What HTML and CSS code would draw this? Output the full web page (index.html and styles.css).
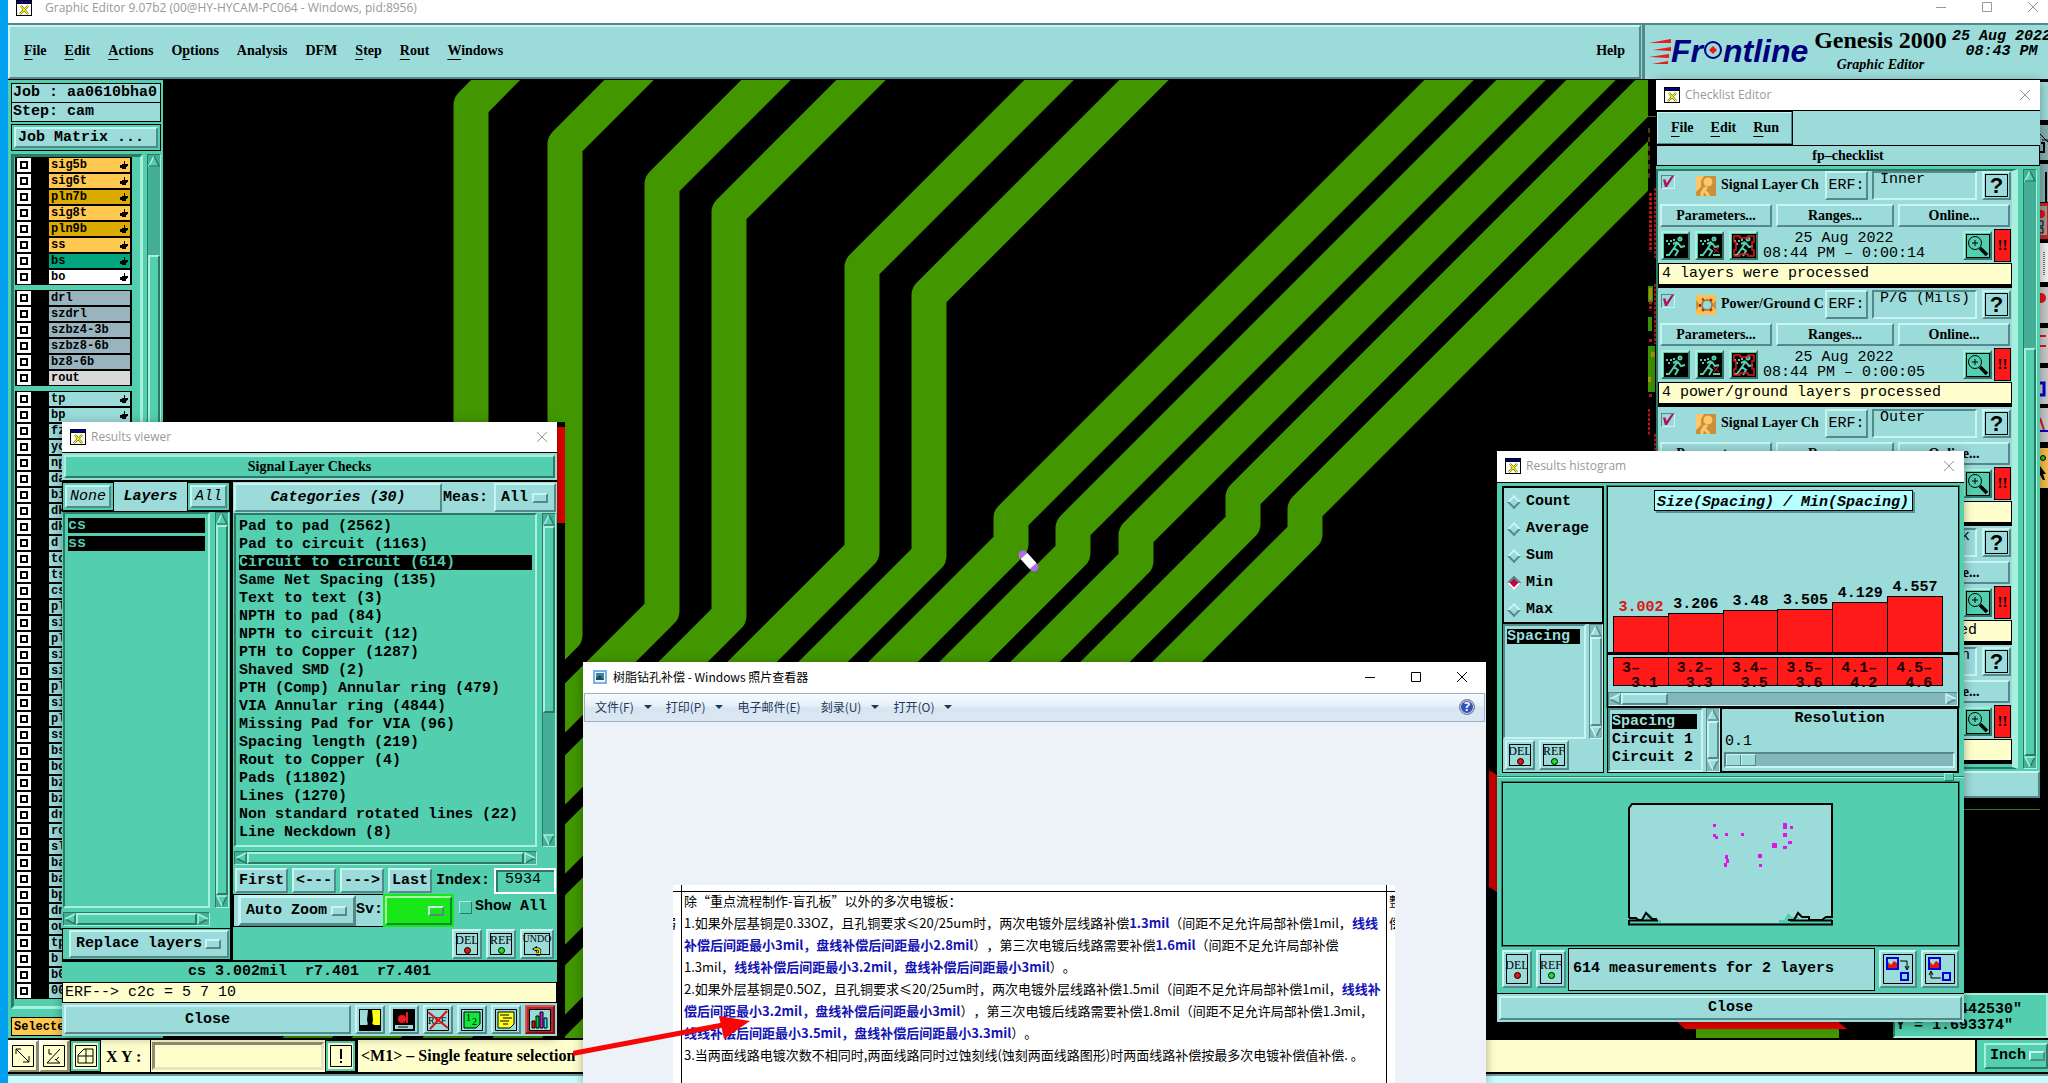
FILE: index.html
```html
<!DOCTYPE html>
<html lang="zh-CN">
<head>
<meta charset="utf-8">
<title>Graphic Editor</title>
<link rel="stylesheet" href="styles.css">
</head>
<body>
<svg class="defs" aria-hidden="true">
  <symbol id="xwin" viewBox="0 0 16 16"><rect width="16" height="16" fill="#000"/><rect x="1" y="4" width="14" height="11" fill="#fff"/><rect x="1" y="1" width="14" height="2" fill="#00008b"/><path d="M5 6l7 8M12 6l-8 8" stroke="#222" stroke-width="2"/><path d="M5 6l7 8M12 6l-8 8" stroke="#ff0" stroke-width="1.2"/></symbol>
  <symbol id="x" viewBox="0 0 12 12"><path d="M1 1l10 10M11 1L1 11" fill="none" stroke="currentColor"/></symbol>
  <symbol id="min" viewBox="0 0 12 12"><path d="M1 6.5h10" stroke="currentColor"/></symbol>
  <symbol id="max" viewBox="0 0 12 12"><path d="M1.500 1.500h9v9h-9z" fill="none" stroke="currentColor"/></symbol>
  <symbol id="hand" viewBox="0 0 8 8"><path d="M4 0h1v3h3v2H7v1H6v2H2V7H0V4h2V3h2z"/></symbol>
  <symbol id="up" viewBox="0 0 12 12"><path d="M6 1L1 11h10z" fill="var(--f)"/><path d="M11 11H1L6 1" fill="none" stroke="var(--l)" stroke-width="1.500"/><path d="M6 1l5 10H1" fill="none" stroke="var(--d)" stroke-width="1.500"/></symbol>
  <symbol id="down" viewBox="0 0 12 12"><path d="M6 11L1 1h10z" fill="var(--f)"/><path d="M11 1L6 11" stroke="var(--d)" stroke-width="1.500"/><path d="M11 1H1l5 10" fill="none" stroke="var(--l)" stroke-width="1.500"/></symbol>
  <symbol id="left" viewBox="0 0 12 12"><path d="M1 6l10-5v10z" fill="var(--f)"/><path d="M11 1v10L1 6" fill="none" stroke="var(--d)" stroke-width="1.500"/><path d="M1 6l10-5" stroke="var(--l)" stroke-width="1.500"/></symbol>
  <symbol id="right" viewBox="0 0 12 12"><path d="M11 6L1 1v10z" fill="var(--f)"/><path d="M11 6L1 11" stroke="var(--d)" stroke-width="1.500"/><path d="M1 11V1l10 5" fill="none" stroke="var(--l)" stroke-width="1.500"/></symbol>
  <symbol id="run1" viewBox="0 0 24 24"><rect width="24" height="24"/><g fill="none" stroke="#53cfaf" stroke-width="2"><circle cx="16" cy="5" r="1.500"/><path d="M14 8l-4 6 4 3-3 5M10 14l-5 7H2M13 8l-4 2M14 9l3 4 4-1" /></g><path d="M2 6h2v2H2zM6 6h2v2H6zM4 9h2v2H4zM9 5h2v2H9z" fill="#53cfaf"/></symbol>
  <symbol id="run2" viewBox="0 0 24 24"><use href="#run1"/><path d="M15 21h7" stroke="#53cfaf" stroke-width="2"/><path d="M15 14l6 5M21 13l-5 6" stroke="#d22"/></symbol>
  <symbol id="run3" viewBox="0 0 24 24"><use href="#run1"/><path d="M2 2h6v2h8V2h6v6h-2v8h2v6h-6v-2H8v2H2v-6h2V8H2z" fill="none" stroke="#e01818" stroke-width="1.500"/></symbol>
  <symbol id="mag" viewBox="0 0 24 24"><rect x=".5" y=".5" width="23" height="23" fill="none" stroke="#000"/><circle cx="9" cy="9" r="6.500" fill="none" stroke="#000"/><path d="M6 9h6M9 6v6" stroke="#000"/><path d="M14 14l7 7" stroke="#000" stroke-width="3.500"/></symbol>
  <symbol id="sig" viewBox="0 0 20 20"><rect width="20" height="20" fill="#c98f3c"/><path d="M0 0h8L5 5v6L0 16z" fill="#fbc868"/><circle cx="12" cy="6" r="5" fill="#fbc868" stroke="#c98f3c"/><path d="M11 11L8 14l5 6M9 12l-3 5v3" stroke="#fbc868" stroke-width="3" fill="none"/></symbol>
  <symbol id="pwr" viewBox="0 0 20 20"><rect width="20" height="20" fill="#fbc04e"/><path d="M0 5l4 5-4 5zM20 5l-4 5 4 5z" fill="#c98f3c"/><circle cx="11" cy="10" r="5" fill="#9bdbda" stroke="#8a8a5a" stroke-width="2"/><path d="M6 5l2-1M14 4l2 2M16 14l-2 2M6 14l2 2M4 9v3" stroke="#d01818" stroke-width="2"/></symbol>
</svg>

<div class="desktop">
<main class="app">
  <header class="apptitle"><svg class="i16"><use href="#xwin"/></svg><h1>Graphic Editor 9.07b2 (00@HY-HYCAM-PC064 - Windows, pid:8956)</h1>
    <span class="wbtns"><button aria-label="Minimize"><svg><use href="#min"/></svg></button><button aria-label="Maximize"><svg><use href="#max"/></svg></button><button aria-label="Close window"><svg><use href="#x"/></svg></button></span></header>
  <div class="top">
    <nav class="menubar bev">
      <button><u>F</u>ile</button><button><u>E</u>dit</button><button><u>A</u>ctions</button><button>O<u>p</u>tions</button><button>Analysis</button><button>DFM</button><button><u>S</u>tep</button><button><u>R</u>out</button><button><u>W</u>indows</button><button class="help">Help</button>
    </nav>
    <div class="brand">
      <div class="logo"><svg width="22" height="26" viewBox="0 0 22 26"><path d="M0 4l22-4v4zM4 11l18-3v4zM0 18l20-3v4zM3 25l16-3v3z" fill="#f01818"/></svg><b>Fr<svg width="20" height="24" viewBox="0 0 20 24"><circle cx="10" cy="13" r="8" fill="none" stroke="#00007c" stroke-width="2"/><path d="M10 9l4 4-4 4-4-4z" fill="#f01818"/></svg>ntline</b></div>
      <div class="product"><strong>Genesis 2000</strong><em>Graphic Editor</em></div>
      <time>25 Aug 2022<br>08:43 PM</time>
    </div>
  </div>
  <div class="work">
    <aside class="side">
      <div class="fact">Job : aa0610bha0</div>
      <div class="fact">Step: cam</div>
      <div class="matrix"><button class="bev">Job Matrix ...</button></div>
      <div class="layerbox">
        <div class="layers">
          <div class="grp">
            <label><input type="checkbox"><span class="sig">sig5b<svg><use href="#hand"/></svg></span></label>
            <label><input type="checkbox"><span class="sig">sig6t<svg><use href="#hand"/></svg></span></label>
            <label><input type="checkbox"><span class="pln">pln7b<svg><use href="#hand"/></svg></span></label>
            <label><input type="checkbox"><span class="sig">sig8t<svg><use href="#hand"/></svg></span></label>
            <label><input type="checkbox"><span class="pln">pln9b<svg><use href="#hand"/></svg></span></label>
            <label><input type="checkbox"><span class="sig">ss<svg><use href="#hand"/></svg></span></label>
            <label><input type="checkbox"><span class="bs">bs<svg><use href="#hand"/></svg></span></label>
            <label><input type="checkbox"><span class="bo">bo<svg><use href="#hand"/></svg></span></label>
          </div>
          <div class="grp">
            <label><input type="checkbox"><span class="drl">drl</span></label>
            <label><input type="checkbox"><span class="drl">szdrl</span></label>
            <label><input type="checkbox"><span class="drl">szbz4-3b</span></label>
            <label><input type="checkbox"><span class="drl">szbz8-6b</span></label>
            <label><input type="checkbox"><span class="drl">bz8-6b</span></label>
            <label><input type="checkbox"><span class="rout">rout</span></label>
          </div>
          <div class="grp">
            <label><input type="checkbox"><span>tp<svg><use href="#hand"/></svg></span></label>
            <label><input type="checkbox"><span>bp<svg><use href="#hand"/></svg></span></label>
            <label><input type="checkbox"><span>fz</span></label>
            <label><input type="checkbox"><span>yc</span></label>
            <label><input type="checkbox"><span>np</span></label>
            <label><input type="checkbox"><span>da</span></label>
            <label><input type="checkbox"><span>bi</span></label>
            <label><input type="checkbox"><span>dk</span></label>
            <label><input type="checkbox"><span>dk</span></label>
            <label><input type="checkbox"><span>d</span></label>
            <label><input type="checkbox"><span>to</span></label>
            <label><input type="checkbox"><span>ts</span></label>
            <label><input type="checkbox"><span>cs</span></label>
            <label><input type="checkbox"><span>pl</span></label>
            <label><input type="checkbox"><span>si</span></label>
            <label><input type="checkbox"><span>pl</span></label>
            <label><input type="checkbox"><span>si</span></label>
            <label><input type="checkbox"><span>si</span></label>
            <label><input type="checkbox"><span>pl</span></label>
            <label><input type="checkbox"><span>si</span></label>
            <label><input type="checkbox"><span>pl</span></label>
            <label><input type="checkbox"><span>ss</span></label>
            <label><input type="checkbox"><span>bs</span></label>
            <label><input type="checkbox"><span>bo</span></label>
            <label><input type="checkbox"><span>bz</span></label>
            <label><input type="checkbox"><span>bz</span></label>
            <label><input type="checkbox"><span>dr</span></label>
            <label><input type="checkbox"><span>ro</span></label>
            <label><input type="checkbox"><span>sl</span></label>
            <label><input type="checkbox"><span>ba</span></label>
            <label><input type="checkbox"><span>ba</span></label>
            <label><input type="checkbox"><span>bp</span></label>
            <label><input type="checkbox"><span>dn</span></label>
            <label><input type="checkbox"><span>ou</span></label>
            <label><input type="checkbox"><span>tp</span></label>
            <label><input type="checkbox"><span>b</span></label>
            <label><input type="checkbox"><span>b0</span></label>
            <label><input type="checkbox"><span>00</span></label>
          </div>
        </div>
        <div class="sb v"><svg><use href="#up"/></svg><i class="gap90"></i><b></b><svg><use href="#down"/></svg></div>
      </div>
      <div class="selected">Selected</div>
    </aside>
    <div class="canvas">
      <svg width="100%" height="100%" aria-label="Board traces">
        <g transform="translate(-163 -79)">
          <clipPath id="view"><rect x="163" y="79" width="1485" height="960"/></clipPath>
          <g clip-path="url(#view)" fill="none" stroke="#429700" stroke-width="35" stroke-linejoin="round">
            <path d="M534 40L471 104V700"/>
            <path d="M668 40L565 143V634L465 734"/>
            <path d="M805 40L662 183V610L262 1010"/>
            <path d="M900 40L729 211V615L229 1115"/>
            <path d="M1088 40L862 266V551L300 1113"/>
            <path d="M1183 40L929 294V555L371 1113"/>
            <path d="M1488 40L1011 517V543L441 1113"/>
            <path d="M1560 40L1073 527V552L512 1113"/>
            <path d="M1630 40L1136 534V560L583 1113"/>
            <path d="M1699 40L1243 496V523L653 1113"/>
            <path d="M1773 40L1305 508V533L725 1113"/>
          </g>
          <path d="M557 421h8v617h-8z"/>
          <path d="M557 426h8v96h-8z" fill="#e00000"/>
          <path d="M1023 554l11 12" stroke="#b468f0" stroke-width="9" stroke-linecap="round"/>
          <path d="M1024 555l9 10" stroke="#fff" stroke-width="9"/>
          <path d="M1489 769l8 5v117l-8-5z" fill="#d80000"/>
          <path d="M1675 1019h161l11 9h-162z" fill="#f00000"/>
          <path d="M1696 1028h143v10h-143z" fill="#429700"/>
          <path d="M1648 115.500h10M1964 808.500h84M2038 674.500h10" stroke="#3f7a10"/>
          <g stroke="#c01818" stroke-dasharray="3 1.500">
            <path d="M1650.500 192v59M1650.500 296v14M1650.500 338v4M1650.500 393v4" stroke-width="3"/>
            <path d="M1655 187v70M1655 283v60M1655 433v20M1649 408v27" stroke-width="2"/>
          </g>
          <path d="M1648 285h5v16h-5zM1648 316h4v14h-4zM1648 345h7v46h-7z" fill="#429700"/>
          <path d="M1649 127v52" stroke="#a88410" stroke-width="1" stroke-dasharray="5 4"/>
          <path d="M1651 351h4v5h-4zM1648 376h3v5h-3zM1649 287h3v12h-3z" fill="#b09a10"/>
        </g>
      </svg>
    </div>
    <svg class="tools" width="8" height="470" aria-hidden="true"><rect width="8" height="470"/>
      <path d="M0 2h8v38H0z" fill="#9bdbda"/><path d="M0 45h8v35H0zM0 84h8v38H0z" fill="#83b0b3"/><path d="M0 54l8 8M2 60h6" stroke="#000"/><path d="M1 63h3v9H0M6 92v36h-6" stroke="#000" fill="none" stroke-width="2"/>
      <path d="M0 123h8v36H0z" fill="#d02020"/><path d="M0 126h7v29H0z" fill="#9a9a9a"/><circle cx="1" cy="134" r="4" fill="#e01010"/><path d="M0 141h3v5H0M0 148h3v5H0" stroke="#000" fill="none"/>
      <path d="M0 163h8v39H0z" fill="#f0f0f0"/><path d="M4 172v24" stroke="#000" stroke-dasharray="1 1"/>
      <path d="M0 207h8v36H0zM0 248h8v35H0zM0 288h8v36H0zM0 328h8v34H0z" fill="#c9c9c9"/><circle cx="1" cy="218" r="5" fill="#e01010"/><path d="M0 256h6M0 266h6" stroke="#e01010" stroke-width="2"/><path d="M0 303h4v12H0" fill="none" stroke="#00c" stroke-width="3"/><path d="M0 338l4 12" stroke="#e01010" stroke-width="2"/><path d="M0 351h8" stroke="#00c" stroke-width="2"/>
      <path d="M0 368h8v40H0z" fill="#f4bc4a"/><circle cx="3" cy="378" r="2.500" fill="#22c822" stroke="#000"/><path d="M0 386l6 8H3l2 6H3l-3-5z"/>
    </svg>
    <div class="xy">X = 10.442530"<br>Y = 1.693374"</div>
  </div>
  <footer class="status">
    <button class="cream bev" aria-label="Distance"><svg viewBox="0 0 22 22"><path d="M.5.500h21v21H.5zM4 4l13 13M4 9V4h5M17 11v6h-6" fill="none" stroke="#000"/></svg></button>
    <button class="cream bev" aria-label="Angle"><svg viewBox="0 0 22 22"><path d="M.5.500h21v21H.5zM4 18L17 4M4 18h13M6 4v5h3M12 14l5 4M16 12l-3 3" fill="none" stroke="#000"/></svg></button>
    <button class="cream tealedge bev" aria-label="Grid"><svg viewBox="0 0 22 22"><path d="M.5.500h21v21H.5zM3 10l6-6h9v14H3zM11 4v14M3 11h15" fill="none" stroke="#000"/></svg></button>
    <label class="xylab" for="xyin">X Y :</label>
    <input id="xyin" class="xyin" type="text">
    <button class="cream tealedge bev" aria-label="Alert"><svg viewBox="0 0 22 22"><path d="M.5.500h21v21H.5z" fill="none" stroke="#000"/><path d="M10 4h2v10h-2zM10 16h2v2h-2z"/></svg></button>
    <output>&lt;M1&gt; – Single feature selection</output>
    <div class="unit"><label class="opt bev teal"><select aria-label="Unit"><option>Inch</option></select></label></div>
  </footer>
  <div class="strip"></div>
</main>

<section class="win checklist">
  <header class="title"><svg class="i16"><use href="#xwin"/></svg><h2>Checklist Editor</h2><button aria-label="Close checklist"><svg><use href="#x"/></svg></button></header>
  <div class="cmenu"><nav class="bev"><button><u>F</u>ile</button><button><u>E</u>dit</button><button><u>R</u>un</button></nav></div>
  <h3>fp–checklist</h3>
  <div class="cbody">
    <div class="items">
      <article>
        <div class="r1"><input type="checkbox" checked aria-label="Signal layer inner"><svg class="i20"><use href="#sig"/></svg><strong>Signal Layer Ch</strong><button class="bev erf">ERF:</button><input type="text" value="Inner" aria-label="ERF model"><button class="bev q" aria-label="Help"><b>?</b></button></div>
        <div class="r2"><button class="bev">Parameters...</button><button class="bev">Ranges...</button><button class="bev">Online...</button></div>
        <div class="r3"><button class="bev teal" aria-label="Run"><svg><use href="#run1"/></svg></button><button class="bev teal" aria-label="Run local"><svg><use href="#run2"/></svg></button><button class="bev teal" aria-label="Run area"><svg><use href="#run3"/></svg></button><time>25 Aug 2022<br>08:44 PM – 0:00:14</time><button class="bev teal" aria-label="View results"><svg><use href="#mag"/></svg></button><b class="alarm">!!</b></div>
        <p>4 layers were processed</p>
      </article>
      <article>
        <div class="r1"><input type="checkbox" checked aria-label="Power ground"><svg class="i20"><use href="#pwr"/></svg><strong>Power/Ground C</strong><button class="bev erf">ERF:</button><input type="text" value="P/G (Mils)" aria-label="ERF model"><button class="bev q" aria-label="Help"><b>?</b></button></div>
        <div class="r2"><button class="bev">Parameters...</button><button class="bev">Ranges...</button><button class="bev">Online...</button></div>
        <div class="r3"><button class="bev teal" aria-label="Run"><svg><use href="#run1"/></svg></button><button class="bev teal" aria-label="Run local"><svg><use href="#run2"/></svg></button><button class="bev teal" aria-label="Run area"><svg><use href="#run3"/></svg></button><time>25 Aug 2022<br>08:44 PM – 0:00:05</time><button class="bev teal" aria-label="View results"><svg><use href="#mag"/></svg></button><b class="alarm">!!</b></div>
        <p>4 power/ground layers processed</p>
      </article>
      <article>
        <div class="r1"><input type="checkbox" checked aria-label="Signal layer outer"><svg class="i20"><use href="#sig"/></svg><strong>Signal Layer Ch</strong><button class="bev erf">ERF:</button><input type="text" value="Outer" aria-label="ERF model"><button class="bev q" aria-label="Help"><b>?</b></button></div>
        <div class="r2"><button class="bev">Parameters...</button><button class="bev">Ranges...</button><button class="bev">Online...</button></div>
        <div class="r3"><time></time><button class="bev teal" aria-label="View results"><svg><use href="#mag"/></svg></button><b class="alarm">!!</b></div>
        <p></p>
      </article>
      <article>
        <div class="r1"><strong></strong><input type="text" value="Soldermask" aria-label="ERF model"><button class="bev q" aria-label="Help"><b>?</b></button></div>
        <div class="r2"><button class="bev">Parameters...</button><button class="bev">Ranges...</button><button class="bev">Online...</button></div>
        <div class="r3"><time></time><button class="bev teal" aria-label="View results"><svg><use href="#mag"/></svg></button><b class="alarm">!!</b></div>
        <p>4 solder mask layers were processed</p>
      </article>
      <article>
        <div class="r1"><strong></strong><input type="text" value="Silkscreen" aria-label="ERF model"><button class="bev q" aria-label="Help"><b>?</b></button></div>
        <div class="r2"><button class="bev">Parameters...</button><button class="bev">Ranges...</button><button class="bev">Online...</button></div>
        <div class="r3"><time></time><button class="bev teal" aria-label="View results"><svg><use href="#mag"/></svg></button><b class="alarm">!!</b></div>
        <p></p>
      </article>
    </div>
    <div class="sb v"><svg><use href="#up"/></svg><i class="gap165"></i><b></b><svg><use href="#down"/></svg></div>
  </div>
  <button class="bev cclose" aria-label="Close"></button>
</section>

<section class="win hist">
  <header class="title"><svg class="i16"><use href="#xwin"/></svg><h2>Results histogram</h2><button aria-label="Close histogram"><svg><use href="#x"/></svg></button></header>
  <div class="hbody">
    <div class="hleft">
      <div class="stats" role="radiogroup" aria-label="Statistic">
        <label><input type="radio" name="stat">Count</label>
        <label><input type="radio" name="stat">Average</label>
        <label><input type="radio" name="stat">Sum</label>
        <label><input type="radio" name="stat" checked>Min</label>
        <label><input type="radio" name="stat">Max</label>
      </div>
      <div class="pick"><ul><li class="on">Spacing</li></ul><div class="sb v cy"><svg><use href="#up"/></svg><b></b><svg><use href="#down"/></svg></div></div>
      <div class="two"><button class="bev tag">DEL<i class="red"></i></button><button class="bev tag">REF<i class="grn"></i></button></div>
    </div>
    <div class="hright">
      <div class="chart">
        <h4>Size(Spacing) / Min(Spacing)</h4>
        <div class="bars">
          <div><span class="hot">3.002</span><i style="height:36px"></i></div>
          <div><span>3.206</span><i style="height:39px"></i></div>
          <div><span>3.48</span><i style="height:42px"></i></div>
          <div><span>3.505</span><i style="height:43px"></i></div>
          <div><span>4.129</span><i style="height:50px"></i></div>
          <div><span>4.557</span><i style="height:56px"></i></div>
        </div>
        <div class="bins"><span>3–<br> 3.1</span><span>3.2–<br> 3.3</span><span>3.4–<br> 3.5</span><span>3.5–<br> 3.6</span><span>4.1–<br> 4.2</span><span>4.5–<br> 4.6</span></div>
        <div class="sb h cy"><svg><use href="#left"/></svg><b class="short"></b><i></i><svg><use href="#right"/></svg></div>
      </div>
      <div class="hlow">
        <div class="pick"><ul><li class="on">Spacing</li><li>Circuit 1</li><li>Circuit 2</li></ul><div class="sb v cy"><svg><use href="#up"/></svg><b></b><svg><use href="#down"/></svg></div></div>
        <div class="res"><label for="res">Resolution</label><output for="res">0.1</output><input id="res" type="range" min="0" max="10" value="0"></div>
      </div>
    </div>
  </div>
  <div class="sash"><i></i></div>
  <div class="board"><svg width="206" height="124" viewBox="0 0 206 124">
    <path d="M1 116V6l3-4h200v113h-6v3h-27v-3h-7l-4-4-4 7h-5v3h-118v-3h-6l-6-7-5 7h-5v-2z" fill="#9bdbda"/>
    <path d="M1 116V6l3-4h200v113h-6l-4 3h-13v-3h-7l-4-4-4 7h-6M1 116h7l2 2h4l4-7 6 6h5" fill="none" stroke="#000" stroke-width="2"/><path d="M1 118.500h29M162 118.500h42M0 122.500h205M1 118v4M204 118v4" stroke="#000" stroke-width="2"/>
    <path d="M85 22h3v3h-3zM85 32h3v3h-3zM87 34h3v3h-3zM97 31h3v3h-3zM113 31h3v3h-3zM97 53h3v4h-3zM98 57h3v4h-3zM96 61h3v4h-3zM130 52h4v4h-4zM131 62h3v3h-3zM155 21h4v6h-4zM162 24h3v3h-3zM155 31h4v4h-4zM144 41h5v5h-5zM160 39h4v3h-4zM155 44h4v3h-4z" fill="#dd18e4"/>
  </svg></div>
  <div class="hfoot"><button class="bev tag">DEL<i class="red"></i></button><button class="bev tag">REF<i class="grn"></i></button><output>614 measurements for 2 layers</output>
    <button class="bev" aria-label="Apply to window"><svg viewBox="0 0 30 30"><path d="M.5.500h29v29H.5z" fill="none" stroke="#000"/><path d="M4 4h11v11H4z" fill="#9bdbda" stroke="#0000e0" stroke-width="2"/><path d="M5 14V8l3 3 3-4 3 2v5z" fill="#f01010"/><path d="M18 19h7v7h-7z" fill="none" stroke="#0000e0" stroke-width="2"/><path d="M17 7h7v8M22 12l2 4 2-4" fill="none" stroke="#000"/></svg></button>
    <button class="bev" aria-label="Take from window"><svg viewBox="0 0 30 30"><path d="M.5.500h29v29H.5z" fill="none" stroke="#000"/><path d="M4 4h11v11H4z" fill="#9bdbda" stroke="#0000e0" stroke-width="2"/><path d="M5 14V8l3 3 3-4 3 2v5z" fill="#f01010"/><path d="M18 19h7v7h-7z" fill="none" stroke="#0000e0" stroke-width="2"/><path d="M16 24H6v-6M4 21l2-4 2 4" fill="none" stroke="#000"/></svg></button></div>
  <div class="hclose"><button class="bev">Close</button></div>
</section>

<section class="win viewer">
  <header class="title"><svg class="i16"><use href="#xwin"/></svg><h2>Results viewer</h2><button aria-label="Close viewer"><svg><use href="#x"/></svg></button></header>
  <div class="vhead"><button class="bev teal">Signal Layer Checks</button></div>
  <div class="vcols">
    <div class="vleft">
      <div class="vbar"><span><button class="bev">None</button></span><strong>Layers</strong><span><button class="bev">All</button></span></div>
      <div class="lists">
        <ul><li class="on">cs</li><li class="on">ss</li></ul>
        <div class="sb v"><svg><use href="#up"/></svg><b></b><svg><use href="#down"/></svg></div>
        <div class="sb h"><svg><use href="#left"/></svg><b></b><svg><use href="#right"/></svg></div>
      </div>
      <div class="vrep"><label class="opt bev"><select aria-label="Layer mode"><option>Replace layers</option></select></label></div>
    </div>
    <div class="vright">
      <div class="vbar2"><button class="bev">Categories (30)</button><span>Meas:</span><label class="opt bev"><select aria-label="Measurements"><option>All</option></select></label></div>
      <div class="lists">
        <ul><li>Pad to pad (2562)</li><li>Pad to circuit (1163)</li><li class="on">Circuit to circuit (614)</li><li>Same Net Spacing (135)</li><li>Text to text (3)</li><li>NPTH to pad (84)</li><li>NPTH to circuit (12)</li><li>PTH to Copper (1287)</li><li>Shaved SMD (2)</li><li>PTH (Comp) Annular ring (479)</li><li>VIA Annular ring (4844)</li><li>Missing Pad for VIA (96)</li><li>Spacing length (219)</li><li>Rout to Copper (4)</li><li>Pads (11802)</li><li>Lines (1270)</li><li>Non standard rotated lines (22)</li><li>Line Neckdown (8)</li></ul>
        <div class="sb v"><svg><use href="#up"/></svg><b></b><i class="gap120"></i><svg><use href="#down"/></svg></div>
        <div class="sb h"><svg><use href="#left"/></svg><b></b><svg><use href="#right"/></svg></div>
      </div>
      <div class="vnav"><button class="bev">First</button><button class="bev">&lt;---</button><button class="bev">---&gt;</button><button class="bev">Last</button><label for="idx">Index:</label><input id="idx" type="text" value="5934"></div>
      <div class="vzoom"><div class="boxed"><label class="opt bev"><select aria-label="Zoom mode"><option>Auto Zoom</option></select></label><span>Sv:</span><label class="opt bev green"><select aria-label="Severity"><option></option></select></label></div><label class="show"><input type="checkbox">Show All</label></div>
      <div class="vact"><button class="bev tag">DEL<i class="red"></i></button><button class="bev tag">REF<i class="grn"></i></button><button class="bev tag undo">UNDO<svg width="10" height="10" viewBox="0 0 10 10"><path d="M3 3h3q3 1 1 5H4" fill="none" stroke="#000" stroke-width="3"/><path d="M5 0L0 3l5 3z"/><path d="M2 3h4q3 1 1 5H4" fill="none" stroke="#ff0" stroke-width="1.500"/></svg></button></div>
    </div>
  </div>
  <div class="vmsg">cs 3.002mil&nbsp; r7.401&nbsp; r7.401</div>
  <div class="verf">ERF--&gt; c2c = 5 7 10</div>
  <div class="vfoot">
    <button class="bev wide">Close</button>
    <button class="bev" aria-label="Contrast"><svg viewBox="0 0 22 22"><path d="M0 0h22v22H0z"/><path d="M1 1h10v12l-3 3H1z" fill="#9bdbda"/><path d="M11 1h10v15h-6l-4-3z" fill="#ffff10"/><path d="M9 1h4l1 10-2 10h-2L8 11z"/></svg></button>
    <button class="bev" aria-label="Print"><svg viewBox="0 0 22 22"><path d="M0 0h22v22H0z"/><path d="M2 16h18v4H2z" fill="#9bdbda"/><path d="M5 18h10" stroke="#000"/><circle cx="9" cy="10" r="4" fill="#f01818"/><path d="M14 3v11M9 10h5" stroke="#f01818" stroke-width="2"/></svg></button>
    <button class="bev" aria-label="Clear reference"><svg viewBox="0 0 22 22"><path d="M.5.500h21v21H.5z" fill="none" stroke="#000"/><text x="1" y="15" font-size="10">REF</text><path d="M1 3l20 16M20 2L3 20" stroke="#e01010" stroke-width="2"/></svg></button>
    <button class="bev" aria-label="Numbering"><svg viewBox="0 0 22 22"><path d="M.5.500h21v21H.5z" fill="none" stroke="#000"/><path d="M3 3h16v12l-4 4H3z" fill="#10e83a" stroke="#000"/><text x="5" y="12" font-size="10">1</text><text x="11" y="16" font-size="10">2</text></svg></button>
    <button class="bev" aria-label="Notes"><svg viewBox="0 0 22 22"><path d="M.5.500h21v21H.5z" fill="none" stroke="#000"/><path d="M3 3h16v12l-4 4H3z" fill="#ffff20" stroke="#000"/><path d="M5 6h9M8 9h9M5 12h9M8 15h5" stroke="#000"/></svg></button>
    <button class="bev redbg" aria-label="Histogram"><svg viewBox="0 0 22 22"><path d="M.5.500h21v21H.5z" fill="#9bdbda" stroke="#000"/><path d="M3 12h3v7H3z" fill="#e01010" stroke="#000"/><path d="M7 7h3v12H7z" fill="#10c030" stroke="#000"/><path d="M11 3h3v16h-3z" fill="#c020e0" stroke="#000"/><path d="M15 9h3v10h-3z" fill="#20e0f0" stroke="#000"/></svg></button>
  </div>
</section>

<section class="win photo">
  <header class="title"><svg class="i16" viewBox="0 0 16 16"><path d="M1 1h14v14H1z" fill="#7fb2dc"/><path d="M3 3h10v10H3z" fill="#eef6fb"/><path d="M4 4h8v7H4z" fill="#3e7fb0"/><path d="M4 9l4-3 4 5H4z" fill="#1d4f56"/><path d="M0 5h1v6H0zM15 5h1v6h-1z" fill="#fff"/></svg><h2>树脂钻孔补偿 - Windows 照片查看器</h2>
    <span class="wbtns"><button aria-label="Minimize"><svg><use href="#min"/></svg></button><button aria-label="Maximize"><svg><use href="#max"/></svg></button><button aria-label="Close photo"><svg><use href="#x"/></svg></button></span></header>
  <nav class="pmenu"><button>文件(F)<i></i></button><button>打印(P)<i></i></button><button class="mail">电子邮件(E)</button><button>刻录(U)<i></i></button><button>打开(O)<i></i></button>
    <button class="phelp" aria-label="Help">?</button></nav>
  <div class="pstage">
    <div class="sheet">
      <div class="cell edge l"><p></p><p>弱</p></div>
      <div class="cell mid">
        <p>除“重点流程制作-盲孔板”以外的多次电镀板：</p>
        <p>1.如果外层基铜是0.33OZ，且孔铜要求≤20/25um时，两次电镀外层线路补偿<b>1.3mil</b>（间距不足允许局部补偿1mil，<b>线线</b></p>
        <p><b>补偿后间距最小3mil，盘线补偿后间距最小2.8mil</b>），第三次电镀后线路需要补偿<b>1.6mil</b>（间距不足允许局部补偿</p>
        <p>1.3mil，<b>线线补偿后间距最小3.2mil，盘线补偿后间距最小3mil</b>）。</p>
        <p>2.如果外层基铜是0.5OZ，且孔铜要求≤20/25um时，两次电镀外层线路补偿1.5mil（间距不足允许局部补偿1mil，<b>线线补</b></p>
        <p><b>偿后间距最小3.2mil，盘线补偿后间距最小3mil</b>），第三次电镀后线路需要补偿1.8mil（间距不足允许局部补偿1.3mil，</p>
        <p><b>线线补偿后间距最小3.5mil，盘线补偿后间距最小3.3mil</b>）。</p>
        <p>3.当两面线路电镀次数不相同时,两面线路同时过蚀刻线(蚀刻两面线路图形)时两面线路补偿按最多次电镀补偿值补偿. 。</p>
      </div>
      <div class="cell edge r"><p>整</p><p>偿</p></div>
    </div>
  </div>
</section>
<svg class="arrow" width="180" height="50" viewBox="0 0 180 50" aria-hidden="true"><path d="M2 42L150 14" stroke="#f80606" stroke-width="5" stroke-linecap="round"/><path d="M146 5l31 5-26 18z" fill="#f80606"/></svg>
</div>
</body>
</html>
```
FILE: styles.css
```css
:root{
  --cyan:#9bdbda; --cyl:#c8f4f3; --cyd:#53898b; --cyt:#82b8b9;
  --teal:#53cfaf; --tel:#a6f0dc; --ted:#2c7a65; --tet:#45ae96;
  --cream:#ffffce;
  --mono:"Liberation Mono",monospace;
  --serif:"Liberation Serif",serif;
  --ui:"Open Sans","Noto Sans CJK SC",sans-serif;
}
*{box-sizing:border-box}
html,body{height:100%}
body{margin:0;background:#00a0ee;font:bold 15px/18px var(--mono);color:#000;overflow:hidden}
h1,h2,h3,h4,p,ul{margin:0;padding:0;border:0;font:inherit;list-style:none}
button,input,select{font:inherit;color:inherit;margin:0;padding:0;border:0;background:none;border-radius:0}
button{white-space:nowrap}
svg{display:block}
.defs{display:none}
.desktop{position:relative;height:100vh;overflow:hidden}
.bev{background:var(--cyan);border:2px solid;border-color:var(--cyl) var(--cyd) var(--cyd) var(--cyl)}
.bev.teal{background:var(--teal);border-color:var(--tel) var(--ted) var(--ted) var(--tel)}
.i16{width:16px;height:16px;flex:none}
.i20{width:20px;height:20px;flex:none}

/* main window */
.app{display:flex;flex-direction:column;height:100%;margin-left:8px;background:#000}
.apptitle{height:23px;flex:none;display:flex;gap:13px;background:#fff;padding:0 9px 0 8px;color:#999;font:12px/16px var(--ui)}
.wbtns{margin-left:auto;display:flex;gap:34px}
.wbtns svg{width:12px;height:12px}
.wbtns button{width:12px;height:12px}
.apptitle .wbtns{margin-top:1px}
.top{display:flex;height:56px;flex:none;background:var(--cyan);border-top:2px solid var(--cyd);font:bold 14px/18px var(--serif)}
.menubar{flex:1;display:flex;align-items:center;gap:18px;padding:0 14px 2px 14px;border-bottom-color:var(--cyd)}
.menubar u,.cmenu u{text-underline-offset:4px}
.help{margin-left:auto}
.brand{width:406px;flex:none;border-left:3px solid var(--cyd);display:flex;padding-left:4px;gap:4px;margin-left:1px;overflow:hidden}
.logo{display:flex;gap:0;padding-top:12px;width:160px;flex:none}
.logo svg{flex:none}
.logo>svg{margin-top:2px}
.logo b{display:flex;font:italic bold 32px/28px "Liberation Sans",sans-serif;color:#00007c}
.product{text-align:center;width:135px;flex:none;display:flex;flex-direction:column;white-space:nowrap}
.product strong{font-size:24px;line-height:30px}
.product em{line-height:20px}
.brand time{font:italic bold 15px/15px var(--mono);white-space:nowrap;text-align:center;padding-top:4px}
.work{flex:1;min-height:0;display:flex;position:relative;border-top:1px solid #000}
.canvas{flex:1;min-width:0}
.side{width:155px;flex:none;background:var(--teal);padding:3px 2px 2px 3px;display:flex;flex-direction:column}
.fact{height:20px;border:1px solid #000;background:var(--cyan);padding-left:1px;white-space:nowrap;overflow:hidden}
.fact+.fact{margin-top:-1px}
.matrix{border:1px solid #000;height:27px;padding:2px;margin:2px 0 3px;display:flex}
.matrix button{flex:1;text-align:left;padding-left:2px;line-height:16px}
.layerbox{flex:1;min-height:0;display:flex;gap:4px}
.layers{width:132px;border:3px solid var(--ted);border-right-color:var(--tel);border-bottom-color:var(--tel);padding:0 8px 0 1px;display:flex;flex-direction:column;gap:5px;overflow:hidden;font-size:12px;line-height:14px}
.grp{background:#000;padding:1px 2px;display:flex;flex-direction:column;gap:2px}
.grp label{display:flex;gap:18px;height:14px}
.grp input{appearance:none;width:14px;height:14px;flex:none;background:#fff;border:3px solid #fff;outline:2px solid #000;outline-offset:-5px}
.grp span{flex:1;background:var(--cyan);display:flex;align-items:center;padding:0 2px;justify-content:space-between}
.grp span svg{width:8px;height:8px}
.grp .sig{background:#ffc84e}.grp .pln{background:#dbab00}.grp .bs{background:#00a67d}.grp .bo{background:#fff}.grp .drl{background:#99b4be}.grp .rout{background:#d9d9d9}
.selected{margin-top:8px;border:1px solid #000;background:#ffc84e;font-size:12px;height:19px;padding-left:2px}
.tools{flex:none}
.xy{position:absolute;right:0;bottom:0;width:155px;height:45px;background:var(--teal);border:2px solid var(--tel);border-left-color:var(--ted);border-top-color:var(--tel);line-height:16px;padding:7px 0 0 1px;white-space:pre}
.status{flex:none;display:flex;height:34px;border-top:2px solid #000;background:var(--cream);font:bold 16px/18px var(--serif)}
.status button{width:31px;padding:2px;border-right-width:3px}
.status .cream{background:var(--cream);border-color:#fff #8a8a70 #8a8a70 #fff}
.status .tealedge{border:3px solid var(--teal);outline:1px solid #000;outline-offset:-1px}
.status button svg{width:22px;height:22px;margin:auto}
.xylab{width:50px;padding:8px 0 0 5px;border-right:1px solid #000}
.xyin{width:172px;margin:2px 1px;border:3px solid;border-color:#8f8f74 #e6e6c0 #e6e6c0 #8f8f74;padding-left:4px}
.status output{flex:1;padding:7px 0 0 3px;border-left:2px solid #000;white-space:nowrap}
.unit{width:73px;border-left:2px solid #000;background:var(--teal);padding:3px 0 3px 7px;font:bold 15px/18px var(--mono)}
.strip{flex:none;height:11px;background:#c6fdfd;border-top:2px solid #000;box-shadow:inset 0 2px #6f9a9b}

/* option menus */
.opt{display:flex;align-items:center;height:100%;padding-right:6px}
.opt select{appearance:none;flex:1;min-width:0;padding-left:5px}
.opt::after{content:"";width:12px;height:6px;border:2px solid;border-color:var(--cyl) var(--cyd) var(--cyd) var(--cyl)}
.unit .opt{padding-right:1px}
.unit .opt select{padding-left:4px}

/* scroll bars */
.sb{--f:var(--teal);--l:var(--tel);--d:var(--ted);background:var(--tet);border:1px solid;border-color:var(--ted) var(--tel) var(--tel) var(--ted);display:flex;min-width:0;min-height:0}
.sb.cy{--f:var(--cyan);--l:var(--cyl);--d:var(--cyd);background:var(--cyt);border-color:var(--cyd) var(--cyl) var(--cyl) var(--cyd)}
.sb svg{width:12px;height:12px;flex:none}
.sb b{flex:1;background:var(--f);border:2px solid;border-color:var(--l) var(--d) var(--d) var(--l)}
.sb.v{flex-direction:column;width:14px;flex:none}
.sb.h{height:14px}
.gap90{height:88px}.gap165{height:166px}.gap120{height:121px}
.sb i{flex:none}
.sb.h i{flex:1}
.sb .short{flex:none;width:47px}

/* windows */
.win{position:absolute;background:var(--cyan);box-shadow:0 2px 10px rgba(0,0,0,.35)}
.title{height:30px;background:#fff;display:flex;align-items:center;gap:5px;padding:0 9px 1px 8px;color:#999;font:12px/18px var(--ui)}
.title>button{margin-left:auto;width:12px;height:12px}
.title button svg{width:12px;height:12px}
ul{overflow:hidden;white-space:nowrap}
li.on{background:#000;color:var(--teal)}
.pick li.on{color:var(--cyan)}
.tag{font:12px/12px var(--serif);padding:0}
.tag{width:30px;height:30px;display:flex;flex-direction:column;align-items:center;justify-content:center;gap:1px;outline:1px solid #000;outline-offset:-5px;overflow:hidden}
.tag i{width:7px;height:7px;border-radius:4px;border:1px solid #000}
.red{background:#f01010}.grn{background:#10e820}

/* results viewer */
.viewer{left:62px;top:422px;width:495px}
.title+div{border-top:1px solid #000}
.vhead{height:28px;padding:2px;display:flex}
.vhead button{flex:1;font:bold 14px/18px var(--serif)}
.vcols{border-top:2px solid #000;border-bottom:2px solid #000;display:flex;height:482px;background:var(--teal)}
.vleft{width:171px;border-right:3px solid #000;display:flex;flex-direction:column}
.vright{flex:1;min-width:0;display:flex;flex-direction:column}
.vbar{display:flex;height:30px;border-bottom:1px solid #000;background:var(--cyan)}
.vbar span{background:var(--teal);padding:2px;display:flex;border:1px solid #000}
.vbar span+strong{flex:1;text-align:center;line-height:30px;font-style:italic}
.vbar button{padding:0 3px;font-style:italic;font-weight:normal;line-height:20px}
.vbar2{display:flex;height:31px;background:var(--cyan);padding:1px}
.vbar2>button{width:208px;font-style:italic}
.vbar2 span{width:52px;line-height:30px;padding-left:1px}
.vbar2 .opt{flex:1}
.lists{flex:1;min-height:0;display:grid;grid-template:minmax(0,1fr) 16px/minmax(0,1fr) 14px;gap:4px 5px;padding:0 1px}
.lists ul{border:2px solid;border-color:var(--ted) var(--tel) var(--tel) var(--ted);padding:4px 3px 3px}
.lists li{height:15px;margin-bottom:3px;line-height:15px}
.vrep{height:32px;border:1px solid #000;border-right:0;padding:1px 1px 1px 6px}
.vnav{display:flex;gap:4px;padding:1px 1px 0 2px;height:27px}
.vnav button{width:44px;margin-bottom:1px}
.vnav button:first-child{width:53px}
.vnav label{line-height:26px}
.vnav input{flex:1;min-width:0;background:var(--teal);border:2px solid #fff;box-shadow:inset 2px 2px var(--ted);padding:0 0 3px 9px;font-weight:normal}
.vzoom{display:flex;gap:5px;height:33px}
.boxed{width:221px;display:flex;border:1px solid #000;background:var(--cyan);padding-left:4px}
.boxed .opt:first-child{width:118px}
.boxed .opt{border-width:3px}
.boxed span{line-height:30px;width:28px}
.boxed .green{flex:1;background:#18e818;border-color:#b0f8b0 #0f8a30 #0f8a30 #b0f8b0;outline:2px solid #18e818;outline-offset:-1px}
.show{display:flex;gap:3px;align-items:center;height:26px}
.show input{appearance:none;width:13px;height:13px;border:1px solid;border-color:var(--tel) var(--ted) var(--ted) var(--tel)}
.vact{display:flex;gap:4px;justify-content:flex-end;padding:2px 3px 1px}
.vact .undo{width:34px;font-size:10px}
.vmsg{height:20px;background:var(--teal);text-align:center;line-height:20px}
.verf{height:21px;border:1px solid #000;border-width:1px 1px 1px;background:var(--cream);padding-left:2px;font-weight:normal;line-height:20px}
.vfoot{display:flex;gap:4px;padding:2px;height:33px}
.vfoot .wide{flex:1}
.vfoot button:not(.wide){width:30px;padding:2px}
.vfoot svg{width:22px;height:22px}
.vfoot text{font-family:var(--serif);font-weight:normal}
.vfoot .redbg{background:#b02828;border-color:#e05050 #801010 #801010 #e05050}

/* checklist editor */
.checklist{right:8px;top:80px;width:384px;font-weight:normal}
.cmenu{height:35px;display:flex}
.cmenu nav{width:137px;display:flex;gap:17px;padding:0 0 0 13px;font:bold 14px/18px var(--serif);outline:1px solid #000;outline-offset:-1px}
.checklist h3{height:21px;border:1px solid #000;text-align:center;font:bold 14px/19px var(--serif)}
.cbody{background:var(--teal);display:flex;justify-content:space-between;height:605px;padding:3px 3px 2px 0;gap:5px}
.items{flex:1;border:2px solid var(--ted);border-right:6px solid var(--tel);overflow:hidden}
article{height:119px;background:var(--cyan);border-bottom:3px solid #000;padding:2px 1px 0 1px}
.items article:first-child{height:117px;padding-top:0}
.r1{display:flex;height:29px}
.r1 input[type=checkbox]{appearance:none;width:14px;height:14px;flex:none;margin:4px 21px 0 2px;border:1px solid;border-color:var(--cyd) var(--cyl) var(--cyl) var(--cyd)}
.r1 input[type=checkbox]::before{content:"";display:block;width:12px;height:12px;background:#b0125c;clip-path:polygon(8% 30%,30% 30%,38% 60%,80% 0,100% 0,42% 92%,24% 92%)}
.r1 .i20{margin:5px 5px 0 0}
.r1 strong{width:102px;flex:none;overflow:hidden;white-space:nowrap;font:bold 14px/27px var(--serif);margin-right:2px}
.r1 strong:first-child{flex:1}
.erf{width:43px;flex:none}
.r1 input[type=text]{width:105px;flex:none;margin:0 5px 0 4px;border:2px solid;border-color:var(--cyd) var(--cyl) var(--cyl) var(--cyd);padding:0 0 11px 6px}
.q{width:29px;flex:none}
.q b{display:block;width:23px;height:23px;border:1px solid #000;margin:auto;font:bold 22px/21px "Liberation Sans",sans-serif}
.r2{display:grid;grid-template-columns:112px 1fr 112px;gap:4px;height:23px;margin:4px 1px 2px;font:bold 14px/18px var(--serif)}
.r3{display:flex;gap:5px;height:33px;align-items:center;padding-left:2px}
.r3 button{width:29px;height:29px;padding:1px}
.r3 button svg{width:24px;height:24px}
.r3 time{line-height:15px;text-align:center;white-space:pre;margin-right:auto;padding-top:1px}
.alarm{width:17px;height:33px;background:#ff1818;border:1px solid #000;text-align:center;font:bold 15px/31px var(--serif);margin-left:-3px}
article p{height:22px;background:var(--cream);border:1px solid #000;margin:1px -1px 0;padding-left:3px;line-height:20px;white-space:nowrap;overflow:hidden}
.cclose{display:block;width:100%;height:27px}

/* results histogram */
.hist{right:84px;top:451px;width:467px;background:var(--teal)}
.hist .title{height:31px}
.hbody{display:flex;gap:3px;padding:3px 5px 0;height:291px}
.hleft{width:102px;background:var(--cyan);border:1px solid #000;display:flex;flex-direction:column}
.stats{height:137px;border:1px solid #000;border-bottom-width:2px}
.stats label{display:flex;align-items:center;gap:7px;padding-left:5px;height:27px}
.stats input{appearance:none;width:10px;height:10px;border:2px solid;border-color:var(--cyl) var(--cyd) var(--cyd) var(--cyl);transform:rotate(45deg)}
.stats input:checked{background:#c80046;border-color:var(--cyd) #fff #fff var(--cyd)}
.pick{display:flex;flex:1;min-height:0;gap:3px}
.pick ul{flex:1;border:2px solid;border-color:var(--cyd) var(--cyl) var(--cyl) var(--cyd);padding:3px 4px 0 2px}
.pick li{height:15px;line-height:15px;margin-bottom:3px}
.two{display:flex;gap:4px;padding:1px 2px;height:33px}
.hright{flex:1;min-width:0;display:flex;flex-direction:column}
.chart{height:221px;background:var(--cyan);border:1px solid #000;box-shadow:0 0 0 1px var(--ted);display:flex;flex-direction:column;padding-top:3px}
.chart h4{align-self:center;width:259px;height:21px;text-align:center;border:1px solid #000;background:#b4ffff;font-style:italic;line-height:24px;white-space:nowrap;box-shadow:2px 2px #5f8f90}
.bars{flex:1;display:flex;align-items:flex-end;padding:0 16px 0 5px;border-bottom:3px solid #000}
.bars div{flex:1;text-align:center;line-height:16px;margin-right:-1px}
.bars i{display:block;background:#ff1a1a;border:1px solid #000;border-bottom:0}
.hot{color:#d81818}
.bins{display:flex;padding:0 16px 0 5px;margin:2px 0 6px;line-height:15px}
.bins span{flex:1;height:29px;border:1px solid #000;background:#ff1a1a;margin-right:-1px;white-space:pre;padding:3px 0 0 8px;color:#200}
.chart .sb{height:14px}
.hlow{flex:1;display:flex;background:var(--cyan);border:1px solid #000;min-height:0}
.hlow .pick{flex:none;width:112px}
.hlow .pick ul{padding-top:4px}
.res{flex:1;border:1px solid #000;border-left-width:2px;display:flex;flex-direction:column;padding:1px 2px 2px}
.res label{text-align:center}
.res output{padding:5px 0 0 1px;font-weight:normal}
.res input{appearance:none;width:100%;height:16px;background:var(--cyt);border:2px solid;border-color:var(--cyd) var(--cyl) var(--cyl) var(--cyd);margin-top:1px}
.res input::-webkit-slider-thumb{appearance:none;width:30px;height:12px;border:1px solid;border-color:var(--cyl) var(--cyd) var(--cyd) var(--cyl);background:linear-gradient(90deg,var(--cyan) 13px,var(--cyd) 13px,var(--cyd) 14px,var(--cyl) 14px,var(--cyl) 15px,var(--cyan) 15px)}
.sash{height:8px;display:flex;justify-content:flex-end;padding-right:10px;background:linear-gradient(var(--teal) 3px,var(--ted) 3px,var(--ted) 4px,var(--tel) 4px,var(--tel) 5px,var(--teal) 5px)}
.sash i{width:10px;height:8px;background:var(--teal);border:1px solid;border-color:var(--tel) var(--ted) var(--ted) var(--tel)}
.board{height:164px;margin:1px 5px 2px;border:1px solid #000;outline:1px solid var(--ted);padding:19px 0 0 125px}
.hfoot{display:flex;gap:4px;padding:0 5px;height:43px}
.hfoot button{width:38px;height:38px;padding:1px;margin-top:2px}
.hfoot .tag{width:30px;outline-offset:-5px}
.hfoot svg{width:30px;height:30px;margin:auto}
.hfoot output{flex:1;border:1px solid #000;background:var(--cyan);padding-left:4px;line-height:40px;white-space:nowrap;margin-left:-2px}
.hclose{background:var(--cyan);border-top:1px solid #000;height:29px;padding:2px;display:flex;margin-top:2px}
.hclose button{flex:1}

/* photo viewer */
.photo{left:583px;top:662px;bottom:0;width:903px;background:#edf2f9;display:flex;flex-direction:column}
.photo .title{color:#000;height:31px;flex:none;padding:0 18px 1px 9px;font-family:"Noto Sans CJK SC",sans-serif}
.pmenu{height:29px;flex:none;margin:0 1px;border:1px solid #9ab0c4;background:linear-gradient(#f6fafd,#e6eff8 45%,#d8e5f2 50%,#dbe7f3);display:flex;align-items:center;gap:14px;padding:0 9px 1px 10px;font:12px/18px "Noto Sans CJK SC",sans-serif;color:#1e395b}
.pmenu button{display:flex;align-items:center;gap:10px}
.pmenu .mail{margin-right:6px}
.pmenu i{border:4px solid transparent;border-top-color:#1e395b;border-bottom:0}
.pmenu .phelp{margin-left:auto;width:16px;height:16px;border-radius:8px;background:#2f55b8;border:1px solid #888;box-shadow:inset 0 0 0 1px #cdd8ee;color:#fff;font:bold 12px/14px var(--ui);justify-content:center}
.pstage{flex:1;min-height:0;overflow:hidden;padding:163px 91px 0 90px}
.sheet{height:100%;display:flex;padding-top:6px;background:linear-gradient(#000,#000) 0 6px/100% 1px no-repeat #fff}
.cell{font:13px/22px "Noto Sans CJK SC",sans-serif;text-spacing-trim:space-all;white-space:nowrap;overflow:hidden;margin-top:-6px;padding-top:5px;height:300px}
.cell p{height:22px}
.cell b{color:#1414b4}
.mid{flex:1;border-left:1px solid #000;border-right:1px solid #000;padding-left:2px}
.l{width:8px;direction:rtl;padding-right:5px}
.r{width:8px;padding-left:2px}
.arrow{position:absolute;left:573px;top:1011px}
```
